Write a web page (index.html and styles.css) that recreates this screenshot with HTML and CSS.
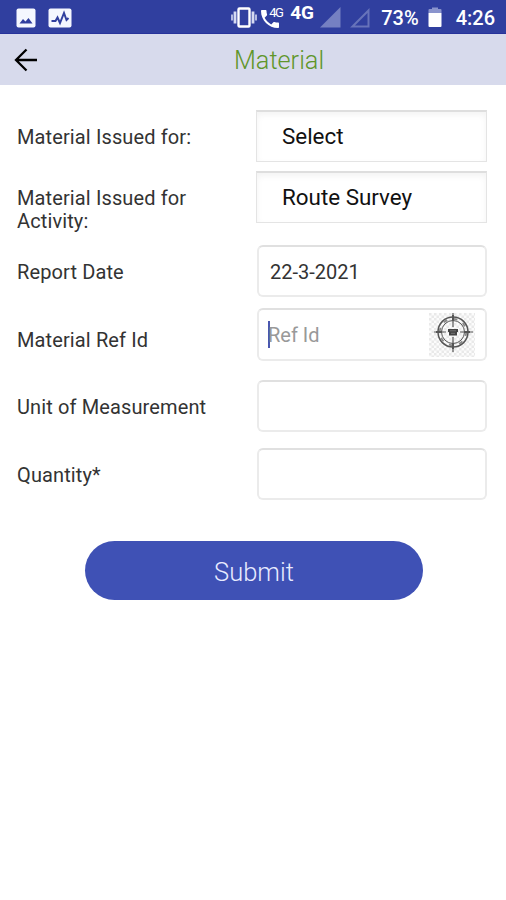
FILE: index.html
```html
<!DOCTYPE html>
<html lang="en">
<head>
  <meta charset="UTF-8" />
  <meta name="viewport" content="width=device-width, initial-scale=1" />
  <title>Material</title>
  <link rel="stylesheet" href="styles.css">
</head>
<body>
  <div class="status-bar">
    <svg class="icon-photo" width="20" height="20" viewBox="0 0 20 20">
      <rect x="0.5" y="0.5" width="19" height="19" rx="2" fill="#f4f7ff" />
      <path d="M3.5 15.5 L7 11 L9.5 13.5 L12.5 10 L16.5 15.5 Z" fill="#303f9f" />
    </svg>
    <svg class="icon-activity" width="24" height="20" viewBox="0 0 24 20">
      <rect x="0.5" y="0.5" width="23" height="19" rx="2" fill="#f4f7ff" />
      <path d="M3.5 13 H7.5 L9.5 9.5 L12 15 L16 5 L18.5 12 L20.5 10" fill="none" stroke="#303f9f" stroke-width="2" />
    </svg>
    <svg class="icon-vibrate" width="26" height="21" viewBox="0 0 26 21">
      <rect x="7.5" y="1.5" width="11" height="18" rx="1" fill="none" stroke="#fff" stroke-width="2.4" />
      <path d="M4 4.5 V16.5 M22 4.5 V16.5" stroke="#d5daf2" stroke-width="2.8" />
      <path d="M1 7.5 V13.5 M25 7.5 V13.5" stroke="#d5daf2" stroke-width="1.6" />
    </svg>
    <span class="call">
      <svg width="18" height="18" viewBox="3 3 18 18">
        <path d="M6.62 10.79c1.44 2.83 3.76 5.14 6.59 6.59l2.2-2.2c.27-.27.67-.36 1.02-.24 1.12.37 2.33.57 3.57.57.55 0 1 .45 1 1V20c0 .55-.45 1-1 1-9.39 0-17-7.61-17-17 0-.55.45-1 1-1h3.5c.55 0 1 .45 1 1 0 1.25.2 2.45.57 3.57.11.35.03.74-.25 1.02l-2.2 2.2z" fill="#fff" />
      </svg>
      <span class="call-type">4G</span>
    </span>
    <span class="network">4G</span>
    <svg class="icon-signal" width="21" height="21" viewBox="0 0 21 21">
      <path d="M0 20.5 L20.5 0 V20.5 Z" fill="#7580c2" />
    </svg>
    <svg class="icon-signal-off" width="20" height="20" viewBox="0 0 20 20">
      <path d="M2.5 18.5 L18.5 2.5 V18.5 Z" fill="none" stroke="#6773ba" stroke-width="2" />
    </svg>
    <span class="percent">73%</span>
    <svg class="icon-battery" width="14" height="21" viewBox="0 0 14 21">
      <path d="M0.5 6 V3 Q0.5 2 1.5 2 H4 V0.5 H10 V2 H12.5 Q13.5 2 13.5 3 V6 Z" fill="#8a94cd" />
      <path d="M0.5 6 H13.5 V19 Q13.5 20 12.5 20 H1.5 Q0.5 20 0.5 19 Z" fill="#fff" />
    </svg>
    <span class="clock">4:26</span>
  </div>

  <header class="header">
    <svg class="back" width="24" height="24" viewBox="0 0 24 24">
      <path d="M12.5 1.5 L2 12 L12.5 22.5 M2 12 H23" fill="none" stroke="#000" stroke-width="2.3" />
    </svg>
    <h1>Material</h1>
  </header>

  <form class="form">
    <div class="row row-issued">
      <label>Material Issued for:</label>
      <div class="select">Select</div>
    </div>
    <div class="row row-activity">
      <label>Material Issued for Activity:</label>
      <div class="select">Route Survey</div>
    </div>
    <div class="row row-date">
      <label for="date">Report Date</label>
      <input class="field" type="text" id="date" value="22-3-2021" />
    </div>
    <div class="row row-ref">
      <label for="ref">Material Ref Id</label>
      <div class="field ref">
        <span class="caret"></span>
        <input type="text" id="ref" placeholder="Ref Id" />
        <svg class="scan" width="46" height="44" viewBox="0 0 46 44">
          <defs>
            <pattern id="checks" width="5" height="5" patternUnits="userSpaceOnUse">
              <rect width="5" height="5" fill="#fcfcfc" />
              <rect width="2.5" height="2.5" fill="#e9e9e9" />
              <rect x="2.5" y="2.5" width="2.5" height="2.5" fill="#e9e9e9" />
            </pattern>
          </defs>
          <rect width="46" height="44" fill="url(#checks)" />
          <g fill="none" stroke="#555">
            <circle cx="24" cy="19" r="15" stroke-width="1.5" />
            <circle cx="24" cy="19" r="11.5" stroke-width="1" />
            <circle cx="24" cy="19" r="13.2" stroke-width="1.8" stroke-dasharray="4 6.37" stroke="#888" />
            <path d="M24 0 V14 M24 24 V39 M5 19 H17 M31 19 H44" stroke-width="1.2" />
            <path d="M24 2 V8 M24 30 V36 M7 19 H13 M35 19 H41" stroke-width="2" />
          </g>
          <path d="M19 16 H29 V19 H28 V22.5 H20 V19 H19 Z" fill="#444" />
          <path d="M21 17.8 H27 M22 20.3 H26" stroke="#888" stroke-width="0.7" />
        </svg>
      </div>
    </div>
    <div class="row row-unit">
      <label for="unit">Unit of Measurement</label>
      <input class="field" type="text" id="unit" />
    </div>
    <div class="row row-quantity">
      <label for="quantity">Quantity*</label>
      <input class="field" type="text" id="quantity" />
    </div>
    <button type="button" class="submit">Submit</button>
  </form>
</body>
</html>
```

FILE: styles.css
```css
* {
  box-sizing: border-box;
}
body {
  margin: 0;
  background: #fff;
  font-family: Roboto, "Liberation Sans", sans-serif;
  color: #333;
}
svg {
  display: block;
  flex: none;
}

/* status bar */
.status-bar {
  display: flex;
  align-items: center;
  height: 34px;
  padding: 2px 11px 0 16px;
  background: #303f9f;
  border-bottom: 1px solid #26329a;
  color: #fff;
  font-size: 20px;
  font-weight: 500;
  line-height: 24px;
}
.icon-activity {
  margin-left: 12px;
}
.icon-vibrate {
  margin-left: auto;
}
.call {
  display: flex;
  align-items: flex-start;
  width: 23px;
  margin-left: 4px;
}
.call svg {
  margin-top: 2px;
}
.call-type {
  margin-left: -10px;
  margin-top: -2px;
  font-size: 13px;
  font-weight: 400;
  line-height: 14px;
  letter-spacing: -1.5px;
}
.network {
  width: 24px;
  margin: -9px 0 0 6px;
  font-size: 19px;
  font-weight: 700;
}
.icon-signal {
  margin-left: 6px;
}
.icon-signal-off {
  margin-left: 9px;
}
.percent {
  margin-left: 11px;
}
.icon-battery {
  margin-left: 9px;
}
.clock {
  margin-left: 14px;
}

/* title bar */
.header {
  display: grid;
  grid-template-columns: 52px 1fr;
  align-items: center;
  height: 51px;
  background: #d7daec;
}
.back {
  margin-left: 14px;
}
.header h1 {
  margin: 3px 0 0;
  text-align: center;
  color: #5f962a;
  font-size: 25.3px;
  font-weight: 300;
  line-height: 30px;
}

/* form */
.form {
  padding: 25px 19px 0 17px;
}
.row {
  display: flex;
  justify-content: space-between;
  align-items: flex-start;
}
.row label {
  width: 200px;
  font-size: 20px;
  line-height: 23.5px;
  letter-spacing: 0.12px;
  padding-top: 16px;
}
.row-issued {
  height: 61px;
}
.row-activity {
  height: 74px;
}
.row-activity label {
  line-height: 23px;
}
.row-date {
  height: 63px;
}
.row-ref {
  height: 72px;
}
.row-ref label {
  padding-top: 21px;
}
.row-unit {
  height: 68px;
}
.row-quantity {
  height: 68px;
}
.select {
  width: 231px;
  height: 52px;
  padding: 0 25px;
  border: 1px solid #e4e4e4;
  border-top: 2px solid #dedede;
  box-shadow: inset 0 3px 6px #f3f3f3;
  color: #111;
  font-size: 22.4px;
  line-height: 48px;
}
.field {
  width: 230px;
  height: 52px;
  padding: 2px 12px 0 11px;
  border: 2px solid #ebebeb;
  border-top-color: #e0e0e0;
  border-radius: 6px;
  background: #fff;
  color: #333;
  font-family: inherit;
  font-size: 20px;
}
.ref {
  display: flex;
  align-items: center;
  height: 53px;
  padding: 0 10px 0 9px;
}
.ref input {
  flex: 1;
  min-width: 0;
  padding: 0;
  border: none;
  background: none;
  font: inherit;
}
.ref input::placeholder {
  color: #999;
}
.caret {
  width: 2px;
  height: 27px;
  margin-right: -2px;
  background: #4a57b0;
}
.submit {
  display: block;
  width: 338px;
  height: 59px;
  margin: 25px auto 0 68px;
  padding: 2px 0 0;
  border: none;
  border-radius: 30px;
  background: #3f51b5;
  color: #e8ebff;
  font-family: inherit;
  font-size: 25.5px;
  font-weight: 300;
}
```
